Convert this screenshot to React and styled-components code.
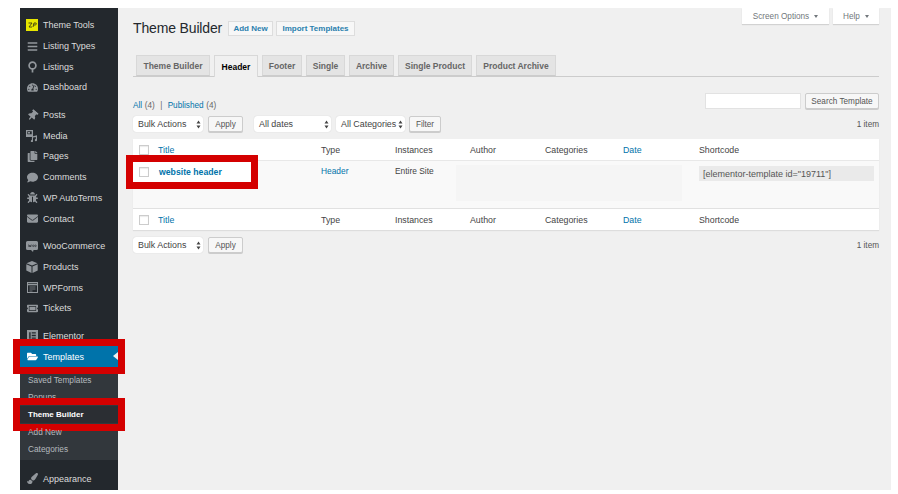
import React from 'react';
import styled, { createGlobalStyle } from 'styled-components';
import {
  FaBars, FaTachometerAlt, FaThumbtack, FaCopy, FaComment, FaEnvelope,
  FaTicketAlt, FaFolderOpen, FaPaintBrush, FaBug,
} from 'react-icons/fa';

const GlobalStyle = createGlobalStyle`
  html, body { margin: 0; padding: 0; background: #fff; }
  * { box-sizing: border-box; }
  body { font-family: "Liberation Sans", Arial, sans-serif; color: #444; }
`;

const Page = styled.div`
  display: flex;
  width: 898px;
  height: 494px;
  padding: 8px 7px 4px 20px;
  overflow: hidden;
`;

const Sidebar = styled.nav`
  position: relative;
  z-index: 1;
  width: 98px;
  flex: none;
  background: #23282d;
  padding-top: 7px;
  display: flex;
  flex-direction: column;
`;

const Group = styled.div`
  margin-bottom: 7px;
`;

const Item = styled.div`
  position: relative;
  display: flex;
  align-items: center;
  height: 20.7px;
  padding-left: 5px;
  font-size: 9px;
  white-space: nowrap;
  color: ${p => (p.$active ? '#fff' : '#dcdcdc')};
  background: ${p => (p.$active ? '#0073aa' : 'transparent')};
`;

const ItemIcon = styled.span`
  width: 18px;
  padding-right: 4px;
  flex: none;
  display: flex;
  justify-content: center;
  align-items: center;
  color: ${p => (p.$active ? '#fff' : '#92979c')};
  font-size: 11px;
`;

const PinIcon = styled(FaThumbtack)`
  transform: rotate(40deg);
`;

const Caret = styled.span`
  position: absolute;
  right: 0;
  top: 6px;
  border-style: solid;
  border-width: 4px 5px 4px 0;
  border-color: transparent #f1f1f1 transparent transparent;
`;

const Submenu = styled.div`
  background: #32373c;
  padding: 3.5px 0 2.5px;
  margin-top: 1px;
  margin-bottom: 8.5px;
`;

const SubItem = styled.div`
  position: relative;
  height: 17.2px;
  padding-left: 8px;
  display: flex;
  align-items: center;
  font-size: ${p => (p.$active ? 8 : 8.3)}px;
  white-space: nowrap;
  color: ${p => (p.$active ? '#fff' : '#b4b9be')};
  font-weight: ${p => (p.$active ? 700 : 400)};
  background: ${p => (p.$active ? '#2b2e33' : 'transparent')};
`;

const RedBox = styled.span`
  position: absolute;
  top: ${p => p.$y}px;
  bottom: ${p => p.$y}px;
  left: -7px;
  right: -7px;
  border: 7px solid #d40000;
  pointer-events: none;
`;

const Main = styled.main`
  flex: 1;
  min-width: 0;
  background: #f0f0f0;
  padding: 0 12px 0 15px;
`;

const ScreenMeta = styled.div`
  display: flex;
  justify-content: flex-end;
  gap: 4px;
  height: 0;
`;

const MetaTab = styled.div`
  width: ${p => p.$w}px;
  height: 16px;
  background: #fff;
  box-shadow: 0 1px 1px rgba(0, 0, 0, 0.12);
  font-size: 8.2px;
  color: #72777c;
  display: flex;
  align-items: center;
  justify-content: center;
  gap: 5px;
  &::after {
    content: '';
    border-style: solid;
    border-width: 3px 2.5px 0;
    border-color: #72777c transparent transparent;
  }
`;

const TitleRow = styled.div`
  display: flex;
  align-items: center;
  padding-top: 5px;
  height: 35px;
`;

const Title = styled.h1`
  width: 95px;
  margin: 0;
  font-size: 14px;
  font-weight: 400;
  letter-spacing: -0.15px;
  color: #23282d;
  white-space: nowrap;
`;

const PageAction = styled.a`
  display: flex;
  align-items: center;
  justify-content: center;
  width: ${p => p.$w}px;
  height: 15px;
  margin-right: 3px;
  border: 1px solid #ddd;
  background: #f7f7f7;
  color: #2a7fae;
  font-size: 8px;
  font-weight: 700;
  white-space: nowrap;
`;

const TabBar = styled.div`
  display: flex;
  align-items: flex-end;
  height: 34px;
  padding: 0 0 0 3px;
  border-bottom: 1px solid #ccc;
  gap: 4px;
`;

const Tab = styled.div`
  width: ${p => p.$w}px;
  height: ${p => (p.$active ? 22 : 21)}px;
  margin-bottom: ${p => (p.$active ? -1 : 0)}px;
  display: flex;
  align-items: center;
  justify-content: center;
  font-size: 8.5px;
  font-weight: 700;
  white-space: nowrap;
  border: 1px solid #d8d8d8;
  border-bottom: ${p => (p.$active ? 'none' : '1px solid #ccc')};
  background: ${p => (p.$active ? '#f0f0f0' : '#e4e4e4')};
  color: ${p => (p.$active ? '#000' : '#666')};
`;

const FilterBlock = styled.div`
  display: flex;
  justify-content: space-between;
  padding-top: 16px;
  height: 39px;
`;

const Views = styled.div`
  padding-top: 8px;
  font-size: 8.2px;
  color: #666;
  word-spacing: 0.4px;
  a { color: #0073aa; }
`;

const SearchBox = styled.div`
  display: flex;
  gap: 4px;
`;

const SearchInput = styled.input`
  width: 96px;
  height: 16px;
  border: 1px solid #e2e2e2;
  background: #fff;
  padding: 0;
`;

const Button = styled.button`
  width: ${p => p.$w}px;
  height: 16px;
  margin-left: ${p => p.$ml || 0}px;
  padding: 0;
  border: 1px solid #ccc;
  border-radius: 2px;
  background: #f7f7f7;
  box-shadow: 0 1px 0 #ccc;
  color: #555;
  font: 8.2px "Liberation Sans", Arial, sans-serif;
  white-space: nowrap;
`;

const ActionRow = styled.div`
  display: flex;
  align-items: center;
  height: 16px;
  margin-bottom: ${p => p.$mb || 0}px;
`;

const Select = styled.div`
  width: ${p => p.$w}px;
  height: 16px;
  margin-left: ${p => p.$ml || 0}px;
  padding: 0 2px 0 5px;
  border-radius: 3px;
  background: #fff;
  box-shadow: 0 0 1px rgba(0, 0, 0, 0.2);
  display: flex;
  align-items: center;
  justify-content: space-between;
  font-size: 8.9px;
  color: #444;
  white-space: nowrap;
`;

const Count = styled.span`
  margin-left: auto;
  font-size: 8.2px;
  color: #555;
`;

const Table = styled.div`
  background: #fff;
  box-shadow: 0 1px 1px rgba(0, 0, 0, 0.08);
  margin-bottom: 7px;
`;

const Row = styled.div`
  display: grid;
  grid-template-columns: 19px 163px 74px 75px 75px 78px 76px 1fr;
  padding-left: 6px;
  height: ${p => p.$h}px;
  align-items: ${p => (p.$body ? 'start' : 'center')};
  border-top: ${p => (p.$line ? `1px solid ${p.$line}` : 'none')};
  background: ${p => p.$bg || 'transparent'};
  font-size: 8.8px;
  color: #444;
  a { color: #0073aa; }
`;

const Check = styled.span`
  width: 10px;
  height: 10px;
  display: block;
  background: #fff;
  border: 1px solid #ccc;
  box-shadow: inset 0 1px 1px rgba(0, 0, 0, 0.08);
`;

const BodyCell = styled.div`
  padding-top: 5px;
  font-size: 8.4px;
`;

const TitleCell = styled.div`
  position: relative;
  grid-column: 1 / span 2;
  margin: 1px 0 0 -6px;
  width: 118px;
  height: 20px;
  background: #fff;
  display: flex;
  align-items: center;
  padding-left: 6px;
  gap: 10px;
  font-size: 8.7px;
  font-weight: 700;
`;

const Shaded = styled.div`
  grid-column: 5 / span 3;
  height: 36px;
  margin: 4px 0 0 -14px;
  width: 226px;
  background: #f5f5f5;
`;

const ShortcodeBox = styled.div`
  margin-top: 5px;
  width: 175px;
  height: 15px;
  background: #eaeaea;
  padding-left: 4px;
  display: flex;
  align-items: center;
  font-size: 9px;
  color: #555;
  white-space: nowrap;
`;

const Arrows = () => (
  <svg width="5" height="9" viewBox="0 0 5 9" fill="#444">
    <path d="M2.500 .5 4.500 3.500H.5ZM2.500 8.500 .5 5.500H4.500Z" />
  </svg>
);

const ThemeLogo = () => (
  <svg width="12" height="12" viewBox="0 0 12 12">
    <rect width="12" height="12" fill="#e6e600" />
    <path d="M2.500 4h3.500L3 8h3M7 8l1-4h2c.6 0 .4 2-.8 2H7.500" fill="none" stroke="#3a3a10" strokeWidth=".9" />
  </svg>
);

const ListingPin = () => (
  <svg width="11" height="12" viewBox="0 0 11 12" fill="none" stroke="#92979c" strokeWidth="1.700">
    <circle cx="5.500" cy="4.500" r="3.400" />
    <path d="M5.500 8v3.500" />
  </svg>
);

const MediaIcon = () => (
  <svg width="12" height="12" viewBox="0 0 12 12" fill="#92979c">
    <path d="M0 0h7v7H0zM1.300 1.300v3h4.400v-3z" fillRule="evenodd" />
    <path d="M2 2h2v1.500H2z" />
    <path d="M6 6.500l5-1.200V10a1.100 1.100 0 1 1-1.200-1V7L7 7.600V11a1.100 1.100 0 1 1-1.200-1z" />
  </svg>
);

const WooIcon = () => (
  <svg width="12" height="11" viewBox="0 0 12 11">
    <path d="M1.500 0h9A1.500 1.500 0 0 1 12 1.500v6A1.500 1.500 0 0 1 10.500 9H7.500L7 11 5 9H1.500A1.500 1.500 0 0 1 0 7.500v-6A1.500 1.500 0 0 1 1.500 0z" fill="#92979c" />
    <path d="M2.500 3.500l.6 2.500.8-2 .8 2 .6-2.500" fill="none" stroke="#23282d" strokeWidth=".6" />
    <circle cx="7.300" cy="4.800" r=".8" fill="none" stroke="#23282d" strokeWidth=".6" />
    <circle cx="9.500" cy="4.800" r=".8" fill="none" stroke="#23282d" strokeWidth=".6" />
  </svg>
);

const BoxIcon = () => (
  <svg width="12" height="12" viewBox="0 0 12 12" fill="#92979c">
    <path d="M6 0l5.500 2.300L6 4.600.5 2.300z" />
    <path d="M.3 3.200l5.200 2.200V12L.3 9.500zM11.700 3.200L6.500 5.400V12l5.200-2.500z" />
  </svg>
);

const FormsIcon = () => (
  <svg width="11" height="11" viewBox="0 0 11 11" fill="none" stroke="#92979c">
    <rect x=".5" y=".5" width="10" height="10" strokeWidth="1" />
    <path d="M.5 2.500h10" strokeWidth="1.600" />
    <path d="M2.500 5h6M2.500 7h6M2.500 9h3" strokeWidth=".7" />
  </svg>
);

const ElementorIcon = () => (
  <svg width="11" height="11" viewBox="0 0 10 10">
    <rect width="10" height="10" fill="#92979c" />
    <path d="M2 2h1.300v6H2zM4.300 2H8v1.200H4.300zM4.300 4.400H8v1.200H4.300zM4.300 6.800H8V8H4.300z" fill="#23282d" />
  </svg>
);

const topItems = [
  { label: 'Theme Tools', icon: <ThemeLogo /> },
  { label: 'Listing Types', icon: <FaBars /> },
  { label: 'Listings', icon: <ListingPin /> },
  { label: 'Dashboard', icon: <FaTachometerAlt /> },
];
const contentItems = [
  { label: 'Posts', icon: <PinIcon /> },
  { label: 'Media', icon: <MediaIcon /> },
  { label: 'Pages', icon: <FaCopy /> },
  { label: 'Comments', icon: <FaComment /> },
  { label: 'WP AutoTerms', icon: <FaBug /> },
  { label: 'Contact', icon: <FaEnvelope /> },
];
const shopItems = [
  { label: 'WooCommerce', icon: <WooIcon /> },
  { label: 'Products', icon: <BoxIcon /> },
  { label: 'WPForms', icon: <FormsIcon /> },
  { label: 'Tickets', icon: <FaTicketAlt /> },
];

const tabs = [
  { label: 'Theme Builder', w: 74 },
  { label: 'Header', w: 44, active: true },
  { label: 'Footer', w: 40 },
  { label: 'Single', w: 39 },
  { label: 'Archive', w: 45 },
  { label: 'Single Product', w: 74 },
  { label: 'Product Archive', w: 80 },
];

const columns = ['Type', 'Instances', 'Author', 'Categories', 'Date', 'Shortcode'];

function MenuGroup({ items }) {
  return (
    <Group>
      {items.map(item => (
        <Item key={item.label}>
          <ItemIcon>{item.icon}</ItemIcon>
          <span>{item.label}</span>
        </Item>
      ))}
    </Group>
  );
}

function HeadRow({ line }) {
  return (
    <Row $h={line ? 22 : 21} $line={line}>
      <Check />
      <a>Title</a>
      {columns.map(col => (col === 'Date' ? <a key={col}>{col}</a> : <span key={col}>{col}</span>))}
    </Row>
  );
}

export default function App() {
  return (
    <Page>
      <GlobalStyle />
      <Sidebar>
        <MenuGroup items={topItems} />
        <MenuGroup items={contentItems} />
        <MenuGroup items={shopItems} />
        <Item>
          <ItemIcon><ElementorIcon /></ItemIcon>
          <span>Elementor</span>
        </Item>
        <Item $active>
          <ItemIcon $active><FaFolderOpen /></ItemIcon>
          <span>Templates</span>
          <Caret />
          <RedBox $y={-7} />
        </Item>
        <Submenu>
          <SubItem>Saved Templates</SubItem>
          <SubItem>Popups</SubItem>
          <SubItem $active>
            Theme Builder
            <RedBox $y={-8} />
          </SubItem>
          <SubItem>Add New</SubItem>
          <SubItem>Categories</SubItem>
        </Submenu>
        <Item>
          <ItemIcon><FaPaintBrush /></ItemIcon>
          <span>Appearance</span>
        </Item>
      </Sidebar>
      <Main>
        <ScreenMeta>
          <MetaTab $w={87}>Screen Options</MetaTab>
          <MetaTab $w={46}>Help</MetaTab>
        </ScreenMeta>
        <TitleRow>
          <Title>Theme Builder</Title>
          <PageAction $w={45}>Add New</PageAction>
          <PageAction $w={79}>Import Templates</PageAction>
        </TitleRow>
        <TabBar>
          {tabs.map(tab => (
            <Tab key={tab.label} $w={tab.w} $active={tab.active}>{tab.label}</Tab>
          ))}
        </TabBar>
        <FilterBlock>
          <Views><a>All</a> (4) &nbsp;|&nbsp; <a>Published</a> (4)</Views>
          <SearchBox>
            <SearchInput />
            <Button $w={74}>Search Template</Button>
          </SearchBox>
        </FilterBlock>
        <ActionRow $mb={7}>
          <Select $w={70}>Bulk Actions <Arrows /></Select>
          <Button $w={35} $ml={5}>Apply</Button>
          <Select $w={77} $ml={11}>All dates <Arrows /></Select>
          <Select $w={69} $ml={5}>All Categories <Arrows /></Select>
          <Button $w={32} $ml={4}>Filter</Button>
          <Count>1 item</Count>
        </ActionRow>
        <Table>
          <HeadRow />
          <Row $h={48} $body $line="#e8e8e8" $bg="#f9f9f9">
            <TitleCell>
              <Check />
              <a>website header</a>
              <RedBox $y={-7} />
            </TitleCell>
            <BodyCell><a>Header</a></BodyCell>
            <BodyCell>Entire Site</BodyCell>
            <Shaded />
            <ShortcodeBox>[elementor-template id="19711"]</ShortcodeBox>
          </Row>
          <HeadRow line="#e1e1e1" />
        </Table>
        <ActionRow>
          <Select $w={70}>Bulk Actions <Arrows /></Select>
          <Button $w={35} $ml={5}>Apply</Button>
          <Count>1 item</Count>
        </ActionRow>
      </Main>
    </Page>
  );
}
